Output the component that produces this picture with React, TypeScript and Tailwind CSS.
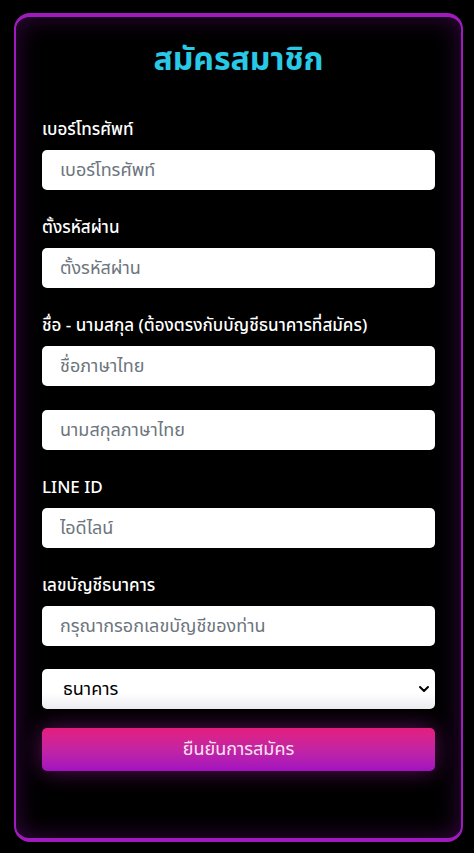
import { ChevronDown } from "lucide-react";

const font = { fontFamily: '"Noto Sans Thai", "Noto Sans", "Liberation Sans", sans-serif' };

function Field({ label, placeholder }: { label?: string; placeholder: string }) {
  return (
    <div>
      {label && <label className="mb-2 block text-[17px] font-medium leading-6 text-white">{label}</label>}
      <input
        placeholder={placeholder}
        className="block h-10 w-full rounded-[5px] bg-white px-[18px] text-[18px] text-gray-800 outline-none placeholder:text-[#6c757d]"
      />
    </div>
  );
}

export default function App() {
  return (
    <div className="min-h-[853px] bg-black pt-[13px]" style={font}>
      <div className="ml-[14px] w-[449px] rounded-[16px] border-x-2 border-y-4 border-[#a01bbd] bg-black px-[26px] pb-[67px] pt-[23px] shadow-[inset_0_0_24px_rgba(150,20,180,0.35)]">
        <h1 className="text-center text-[32px] font-bold leading-10 text-[#29c8e4]">สมัครสมาชิก</h1>

        <div className="mt-[38px] flex flex-col gap-[26px]">
          <Field label="เบอร์โทรศัพท์" placeholder="เบอร์โทรศัพท์" />
          <Field label="ตั้งรหัสผ่าน" placeholder="ตั้งรหัสผ่าน" />
          <div className="flex flex-col gap-6">
            <Field label="ชื่อ - นามสกุล (ต้องตรงกับบัญชีธนาคารที่สมัคร)" placeholder="ชื่อภาษาไทย" />
            <Field placeholder="นามสกุลภาษาไทย" />
          </div>
          <Field label="LINE ID" placeholder="ไอดีไลน์" />
          <Field label="เลขบัญชีธนาคาร" placeholder="กรุณากรอกเลขบัญชีของท่าน" />
        </div>

        <div className="relative mt-[23px]">
          <select className="block h-10 w-full appearance-none rounded-[5px] bg-gradient-to-b from-white from-60% to-[#ececf0] px-[21px] text-[18px] text-black outline-none">
            <option>ธนาคาร</option>
          </select>
          <ChevronDown className="pointer-events-none absolute right-[3px] top-1/2 h-4 w-4 -translate-y-1/2 text-black" strokeWidth={3} />
        </div>

        <button className="mt-[19px] block h-[43px] w-full rounded-[5px] bg-gradient-to-b from-[#e51c7e] to-[#a30fc2] text-[18px] text-[#fbe4f4] shadow-[0_0_22px_rgba(200,30,200,0.45)]">
          ยืนยันการสมัคร
        </button>
      </div>
    </div>
  );
}
